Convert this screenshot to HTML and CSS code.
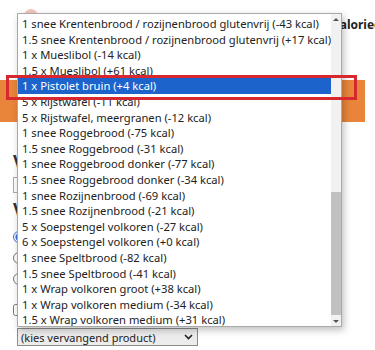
FILE: index.html
```html
<!DOCTYPE html>
<html lang="nl">
<head>
  <meta charset="UTF-8">
  <title>Brood vervangen</title>
  <link rel="stylesheet" href="styles.css">
</head>
<body>

  <div class="page">
    <div class="top">
      <span class="logo"></span>
      <h1>Calorieën vervangen</h1>
    </div>

    <div class="bar"></div>

    <h2>Vervang je brood</h2>
    <input type="text" class="field" value="">

    <h2>Vervangen door</h2>
    <label class="choice"><input type="radio" name="soort" checked> Brood</label>
    <label class="choice"><input type="radio" name="soort"> Ontbijtgranen</label>
    <label class="choice"><input type="radio" name="soort"> Crackers</label>
    <label class="choice check"><input type="checkbox"> Alleen volkoren</label>

    <div class="select">
      <span>(kies vervangend product)</span>
      <svg width="9" height="6" viewBox="0 0 9 6"><path d="M1 1l3.5 3.5L8 1" fill="none" stroke="#222" stroke-width="1.6"/></svg>
    </div>
  </div>

  <!-- open dropdown of the select -->
  <div class="dropdown">
    <ul class="options">
      <li>1 snee Krentenbrood / rozijnenbrood glutenvrij (-43 kcal)</li>
      <li>1.5 snee Krentenbrood / rozijnenbrood glutenvrij (+17 kcal)</li>
      <li>1 x Mueslibol (-14 kcal)</li>
      <li>1.5 x Mueslibol (+61 kcal)</li>
      <li class="active">1 x Pistolet bruin (+4 kcal)</li>
      <li>5 x Rijstwafel (-11 kcal)</li>
      <li>5 x Rijstwafel, meergranen (-12 kcal)</li>
      <li>1 snee Roggebrood (-75 kcal)</li>
      <li>1.5 snee Roggebrood (-31 kcal)</li>
      <li>1 snee Roggebrood donker (-77 kcal)</li>
      <li>1.5 snee Roggebrood donker (-34 kcal)</li>
      <li>1 snee Rozijnenbrood (-69 kcal)</li>
      <li>1.5 snee Rozijnenbrood (-21 kcal)</li>
      <li>5 x Soepstengel volkoren (-27 kcal)</li>
      <li>6 x Soepstengel volkoren (+0 kcal)</li>
      <li>1 snee Speltbrood (-82 kcal)</li>
      <li>1.5 snee Speltbrood (-41 kcal)</li>
      <li>1 x Wrap volkoren groot (+38 kcal)</li>
      <li>1 x Wrap volkoren medium (-34 kcal)</li>
      <li>1.5 x Wrap volkoren medium (+31 kcal)</li>
    </ul>
    <div class="scroll">
      <div class="arrow up"></div>
      <div class="track"><div class="thumb"></div></div>
      <div class="arrow down"></div>
    </div>
  </div>

  <div class="mark"></div>

</body>
</html>
```

FILE: styles.css
```css
body {
  margin: 0;
  background-color: #ffffff;
  color: #222;
  font-family: "Noto Sans", "Open Sans", sans-serif;
  overflow: hidden;
}

.page {
  padding-left: 13px;
  display: flex;
  flex-direction: column;
  align-items: flex-start;
}

.top {
  display: flex;
  align-items: flex-start;
  padding-top: 8px;
  width: 362px;
  overflow: hidden;
  white-space: nowrap;
}

.logo {
  flex-shrink: 0;
  width: 14px;
  height: 14px;
  margin: 1px 0 0 11px;
  border-radius: 50%;
  background-color: #f3c6bd;
}

.top h1 {
  flex-shrink: 0;
  margin: 8px 0 0 294px;
  font-size: 12px;
  line-height: 18px;
  font-weight: bold;
  color: #222;
}

.bar {
  width: 365px;
  height: 42px;
  margin: 46px 0 0 -13px;
  background-color: #e9853a;
}

h2 {
  margin: 28px 0 0 0;
  font-size: 18px;
  line-height: 22px;
  font-weight: bold;
  color: #333;
}

h2 + .choice {
  margin-top: 6px;
}

.field {
  margin-top: 5px;
  margin-bottom: 0;
  width: 200px;
  height: 16px;
  box-sizing: border-box;
  border: 1px solid #aaa;
  padding: 0 3px;
}

.field + h2 {
  margin-top: 5px;
}

.choice {
  display: flex;
  align-items: center;
  height: 21px;
  font-size: 12px;
}

.choice input {
  margin: 0 6px 0 0;
  width: 12px;
  height: 12px;
  accent-color: #3c6fd6;
}

.check {
  margin-top: 10px;
}

.select {
  display: flex;
  align-items: center;
  justify-content: space-between;
  box-sizing: border-box;
  width: 181px;
  height: 18px;
  margin: 8px 0 0 4px;
  padding: 0 4px 0 3px;
  background-color: #ececec;
  border: 1px solid #8c8c8c;
  font-size: 11px;
  color: #222;
}

/* open list */
.dropdown {
  position: absolute;
  left: 17px;
  top: 13px;
  width: 325px;
  height: 314px;
  box-sizing: border-box;
  display: flex;
  background-color: #fff;
  border: 1px solid #a9a9a9;
  box-shadow: 2px 3px 7px rgba(0,0,0,0.25);
  z-index: 2;
}

.options {
  flex: 1;
  list-style: none;
  margin: 0;
  padding: 2px 0 0 0;
  overflow: hidden;
  font-size: 11.2px;
  line-height: 15.6px;
  white-space: nowrap;
}

.options li {
  padding-left: 4px;
  color: #222;
}

.options li.active {
  background-color: #1c64cb;
  color: #fff;
}

.scroll {
  width: 10px;
  display: flex;
  flex-direction: column;
  background-color: #f1f1f1;
}

.arrow {
  height: 10px;
  display: flex;
  align-items: center;
  justify-content: center;
}

.arrow::after {
  content: "";
  border-left: 3px solid transparent;
  border-right: 3px solid transparent;
}

.up::after {
  border-bottom: 3px solid #555;
}

.down::after {
  border-top: 3px solid #555;
}

.track {
  flex: 1;
  padding-top: 168px;
}

.thumb {
  height: 123px;
  background-color: #c1c1c1;
}

/* red annotation box */
.mark {
  position: absolute;
  left: 6px;
  top: 75px;
  width: 351px;
  height: 25px;
  box-sizing: border-box;
  border: 3px solid #d6282e;
  z-index: 3;
}
```
